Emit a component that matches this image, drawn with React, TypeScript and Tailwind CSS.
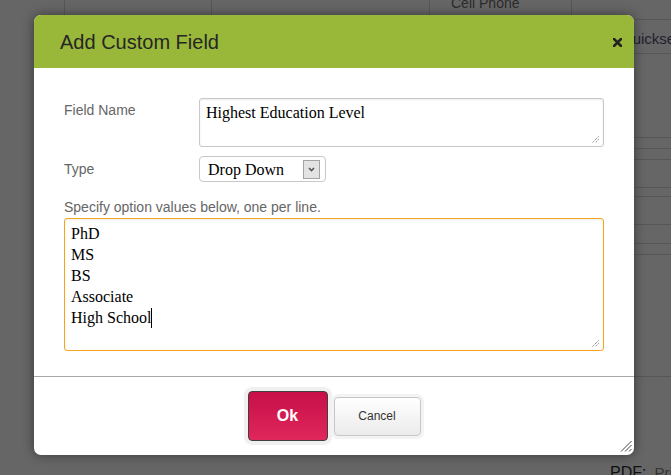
import React from 'react';

const line = 'border-[#575757]';

function Grip({ className }: { className: string }) {
  return (
    <svg className={className} width="8" height="8" viewBox="0 0 8 8">
      <path d="M7.5 1.5 L1.5 7.5 M7.5 4.5 L4.5 7.5" stroke="#555" strokeWidth="1" strokeDasharray="1 1" />
    </svg>
  );
}

function Background() {
  return (
    <div className="flex h-full">
      <div className="w-[65px] shrink-0">
        <div className={`h-[40px] border-r ${line}`} />
      </div>
      <div className="w-[147px] shrink-0">
        <div className={`h-[40px] border-r ${line}`} />
      </div>
      <div className="w-[218px] shrink-0">
        <div className={`h-[40px] border-r ${line}`} />
      </div>
      <div className="w-[142px] shrink-0">
        <div className={`h-[19px] border-r ${line} overflow-hidden`}>
          <div className="-mt-[5px] pl-[21px] text-[14px] leading-[16px] text-[#2b2b2b] whitespace-nowrap">Cell Phone</div>
        </div>
      </div>
      <div className="flex-1 min-w-0 flex flex-col overflow-hidden">
        <div className={`h-[20px] shrink-0 border-b ${line}`} />
        <div className={`h-[34px] shrink-0 border-b ${line} overflow-hidden`}>
          <div className="pt-[10px] pl-[49px] text-[15px] leading-[18px] text-[#1e1e2e] whitespace-nowrap">Quicksearch</div>
        </div>
        <div className={`h-[84px] shrink-0 border-b ${line}`} />
        <div className={`h-[11px] shrink-0 border-b ${line}`} />
        <div className={`h-[11px] shrink-0 border-b ${line}`} />
        <div className={`h-[28px] shrink-0 border-b ${line}`} />
        <div className={`h-[9px] shrink-0 border-b ${line}`} />
        <div className={`h-[28px] shrink-0 border-b ${line}`} />
        <div className={`h-[19px] shrink-0 border-b ${line}`} />
        <div className={`h-[11px] shrink-0 border-b ${line}`} />
        <div className={`h-[122px] shrink-0 border-b ${line}`} />
        <div className="flex-1" />
        <div className="h-[14px] shrink-0 pl-[38px] whitespace-nowrap">
          <span className="text-[16px] leading-[16px] text-[#111]">PDF:</span>
          <span className="ml-[8px] text-[15px] leading-[16px] text-[#333]">Print</span>
        </div>
      </div>
    </div>
  );
}

function Modal() {
  const options = ['PhD', 'MS', 'BS', 'Associate'];
  return (
    <div className="absolute left-[34px] top-[15px] w-[600px] h-[440px] bg-white rounded-[7px] shadow-[0_0_12px_rgba(0,0,0,0.45)] overflow-hidden flex flex-col">
      <div className="h-[53px] shrink-0 bg-[#99b83a] flex items-center justify-between pl-[26px] pr-[12px]">
        <h1 className="text-[20px] leading-[24px] text-[#262626]">Add Custom Field</h1>
        <svg className="mt-[2px]" width="9" height="9" viewBox="0 0 9 9">
          <path d="M1 1 L8 8 M8 1 L1 8" stroke="#222" strokeWidth="2.6" strokeLinecap="square" />
        </svg>
      </div>

      <div className="px-[30px] pt-[30px] text-[14px] leading-[18px] text-[#666]">
        <div className="flex">
          <label className="w-[135px] pt-[3px]">Field Name</label>
          <div className="relative w-[405px] h-[49px] rounded-[3px] border border-[#c8c8c8] shadow-[inset_0_1px_2px_rgba(0,0,0,0.08)] px-[6px] pt-[4px]">
            <span className="font-['Liberation_Serif',serif] text-[16px] leading-[19px] text-black">Highest Education Level</span>
            <Grip className="absolute right-[4px] bottom-[3px]" />
          </div>
        </div>

        <div className="flex items-center mt-[9px]">
          <label className="w-[135px]">Type</label>
          <div className="w-[127px] h-[26px] rounded-[4px] border border-[#c8c8c8] flex items-center justify-between pl-[8px] pr-[5px]">
            <span className="font-['Liberation_Serif',serif] text-[16px] leading-[19px] text-black">Drop Down</span>
            <div className="w-[17px] h-[19px] bg-[#e3e3e3] border border-[#a3a3a3] flex items-center justify-center">
              <svg width="7" height="5" viewBox="0 0 7 5">
                <path d="M1 1 L3.5 3.5 L6 1" stroke="#555" strokeWidth="1.6" fill="none" />
              </svg>
            </div>
          </div>
        </div>

        <p className="mt-[16px]">Specify option values below, one per line.</p>

        <div className="relative mt-[2px] h-[133px] rounded-[3px] border border-[#f6a41a] shadow-[inset_0_1px_2px_rgba(0,0,0,0.08)] px-[6px] pt-[4px] font-['Liberation_Serif',serif] text-[16px] leading-[21px] text-black">
          {options.map((o) => (
            <div key={o}>{o}</div>
          ))}
          <div className="flex items-center">
            High School
            <span className="inline-block w-[1px] h-[20px] bg-black" />
          </div>
          <Grip className="absolute right-[4px] bottom-[3px]" />
        </div>
      </div>

      <div className="relative mt-auto h-[79px] border-t border-[#aaaaaa] flex items-center justify-center gap-[6px]">
        <button className="w-[80px] h-[50px] rounded-[4px] border border-[#3f3f3f] bg-gradient-to-b from-[#c70e49] to-[#e0265b] shadow-[0_0_0_4px_#f0f0f0] text-white font-bold text-[16px]">
          Ok
        </button>
        <button className="w-[87px] h-[39px] rounded-[4px] border border-[#c6c6c6] bg-gradient-to-b from-[#ffffff] to-[#ebebeb] shadow-[0_0_0_3px_#f3f3f3] text-[#333] text-[12px]">
          Cancel
        </button>
        <svg className="absolute right-[2px] bottom-[3px]" width="12" height="12" viewBox="0 0 12 12">
          <path d="M11.5 1 L1 11.5 M11.5 5 L5 11.5 M11.5 9 L9 11.5" stroke="#444" strokeWidth="1" />
        </svg>
      </div>
    </div>
  );
}

export default function App() {
  return (
    <div className="relative w-[671px] h-[475px] overflow-hidden bg-[#666666] font-['Liberation_Sans',Arial,sans-serif]">
      <Background />
      <Modal />
    </div>
  );
}
